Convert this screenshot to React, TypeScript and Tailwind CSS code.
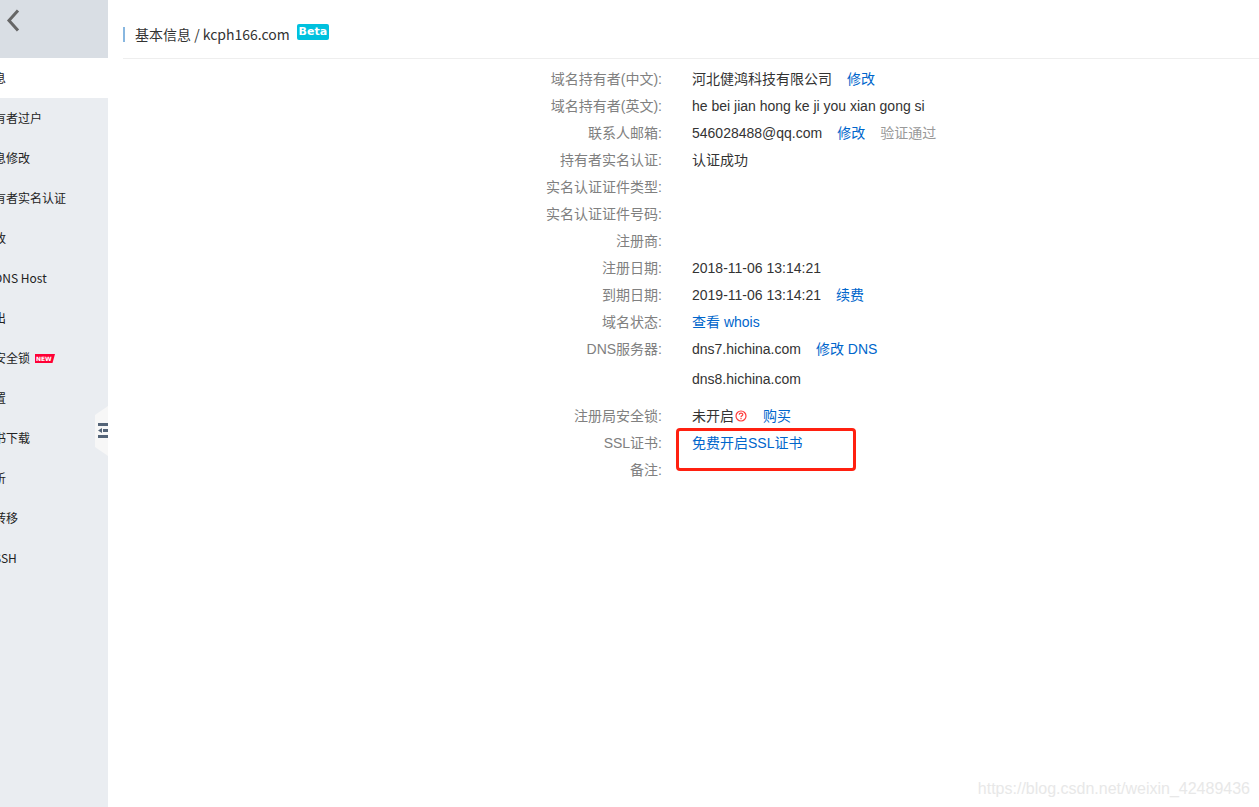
import React, { FC, ReactNode } from "react";

interface MenuItem {
  label: string;
  active?: boolean;
  isNew?: boolean;
}

const menu: MenuItem[] = [
  { label: "息", active: true },
  { label: "有者过户" },
  { label: "息修改" },
  { label: "有者实名认证" },
  { label: "改" },
  { label: "DNS Host" },
  { label: "出" },
  { label: "安全锁", isNew: true },
  { label: "置" },
  { label: "书下载" },
  { label: "析" },
  { label: "转移" },
  { label: "SSH" },
];

const NewBadge: FC = () => (
  <svg width="20" height="9" viewBox="0 0 20 9" className="ml-[5px]">
    <path d="M0 0h20l-2.5 9H0z" fill="#ff0036" />
    <text
      x="1"
      y="7"
      fill="#fff"
      fontSize="6"
      fontWeight="bold"
      fontFamily="DejaVu Sans, sans-serif"
    >
      NEW
    </text>
  </svg>
);

const Sidebar: FC = () => (
  <aside className="relative w-[108px] shrink-0 overflow-hidden bg-[#eaedf1] font-['Noto_Sans_CJK_SC',sans-serif]">
    <div className="h-[58px] bg-[#d9dee4]">
      <button aria-label="返回" className="block pt-[9px] pl-[6px]">
        <svg width="14" height="23" viewBox="0 0 14 23" fill="none">
          <path d="M12 1.5L3 11.5L12 21.5" stroke="#666" strokeWidth="3" />
        </svg>
      </button>
    </div>
    <nav>
      {menu.map(({ label, active, isNew }) => (
        <a
          key={label}
          href="#"
          className={`flex h-10 items-center text-xs whitespace-nowrap text-[#222] ${
            active ? "bg-white" : ""
          }`}
        >
          <span className="-ml-[6px]">{label}</span>
          {isNew && <NewBadge />}
        </a>
      ))}
    </nav>
    <button aria-label="收起" className="absolute top-[406px] right-0">
      <svg width="13" height="50" viewBox="0 0 13 50">
        <path d="M0 9L13 0v50L0 41z" fill="#f7f7f7" />
        <path
          d="M3 17h10v3H3zM8 23h5v3H8zM3 29h10v3H3zM7 22v5L3 24.5z"
          fill="#546478"
        />
      </svg>
    </button>
  </aside>
);

const Row: FC<{ label: string; children?: ReactNode }> = ({
  label,
  children,
}) => (
  <div className="grid grid-cols-2">
    <dt className="pr-[30px] text-right text-[#808080]">{label}:</dt>
    <dd className="relative">{children}</dd>
  </div>
);

const Link: FC<{ children: ReactNode; first?: boolean }> = ({
  children,
  first,
}) => (
  <a href="#" className={`text-[#06c] ${first ? "" : "ml-[15px]"}`}>
    {children}
  </a>
);

const QuestionIcon: FC = () => (
  <svg
    width="12"
    height="12"
    viewBox="0 0 12 12"
    fill="none"
    stroke="#ff3b3b"
    strokeWidth="1.2"
    className="mx-px inline-block align-[-1px]"
  >
    <circle cx="6" cy="6" r="5" />
    <path d="M4.2 4.8C4.2 2.6 7.8 2.6 7.8 4.7C7.8 5.9 6 5.8 6 7.2M6 8v1.3" />
  </svg>
);

const App: FC = () => {
  return (
    <div className="relative flex min-h-screen bg-white">
      <Sidebar />
      <main className="min-w-0 flex-1 pl-[15px]">
        <header className="flex h-[59px] border-b border-[#eee] pt-[24px] font-['Noto_Sans_CJK_SC',sans-serif]">
          <h1 className="mt-[3px] h-[15px] border-l-2 border-[#88b7e0] pl-[10px] text-sm leading-[15px] font-normal whitespace-nowrap text-[#333]">
            基本信息 / kcph166.com
          </h1>
          <span className="ml-[7px] h-4 w-8 rounded-xs bg-[#00c1de] text-center font-['DejaVu_Sans',sans-serif] text-[11px] leading-4 font-bold text-white">
            Beta
          </span>
        </header>

        <dl className="pt-[7px] pl-[2px] font-['Liberation_Sans','Noto_Sans_CJK_SC',sans-serif] text-sm leading-[27px] text-[#333]">
          <Row label="域名持有者(中文)">
            河北健鸿科技有限公司<Link>修改</Link>
          </Row>
          <Row label="域名持有者(英文)">he bei jian hong ke ji you xian gong si</Row>
          <Row label="联系人邮箱">
            546028488@qq.com<Link>修改</Link>
            <span className="ml-[15px] text-[#999]">验证通过</span>
          </Row>
          <Row label="持有者实名认证">认证成功</Row>
          <Row label="实名认证证件类型" />
          <Row label="实名认证证件号码" />
          <Row label="注册商" />
          <Row label="注册日期">2018-11-06 13:14:21</Row>
          <Row label="到期日期">
            2019-11-06 13:14:21<Link>续费</Link>
          </Row>
          <Row label="域名状态">
            <Link first>查看 whois</Link>
          </Row>
          <Row label="DNS服务器">
            <p>
              dns7.hichina.com<Link>修改 DNS</Link>
            </p>
            <p className="mt-[3px] mb-[10px]">dns8.hichina.com</p>
          </Row>
          <Row label="注册局安全锁">
            未开启
            <QuestionIcon />
            <Link>购买</Link>
          </Row>
          <Row label="SSL证书">
            <Link first>免费开启SSL证书</Link>
            <span className="pointer-events-none absolute -top-[2px] -left-[16px] h-[43px] w-[180px] rounded-sm border-3 border-[#ff2010]" />
          </Row>
          <Row label="备注" />
        </dl>
      </main>
      <span className="absolute right-[9px] bottom-[6px] font-['Liberation_Sans',sans-serif] text-base text-[#e8e8e8]">
        https://blog.csdn.net/weixin_42489436
      </span>
    </div>
  );
};

export default App;
